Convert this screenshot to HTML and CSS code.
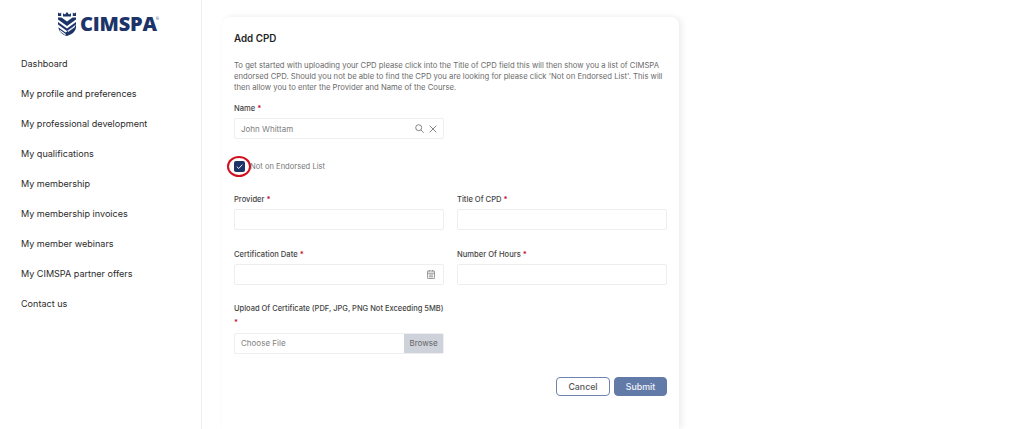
FILE: index.html
```html
<!DOCTYPE html>
<html lang="en">
<head>
<meta charset="utf-8">
<title>Add CPD</title>
<link rel="stylesheet" href="styles.css">
</head>
<body>
<aside class="sidebar">
  <div class="logo">
    <svg class="logo-mark" width="18" height="24" viewBox="0 0 18 24">
      <path fill="#1c3468" d="M0 0.500L2 1.500L3.200 0.500V4H0zM5 4.500V1.200L7 2.500L9 0L11 2.500L13 1.200V4.500zM14.800 4V0.500L16 1.500L18 0.500V4z"/>
      <path fill="#1c3468" d="M0 5.500L3.500 5.500L9 9.500L14.500 5.500H18V7.500L9 14L0 7.500zM0 10L9 16.500L18 10V12.500L9 19L0 12.500zM0.300 15.200L7.500 20.400L9 19.500L18 13V15.500C17.500 19.500 14 22.500 9 24C4 22.500 1 19.500 0.300 15.200z"/>
      <path fill="#fff" d="M1.500 17.500L8 22.300L7 22.900L2.500 19.800zM10 18.700L17 13.800V15L10 20z"/>
    </svg>
    <span class="logo-text">CIMSPA<sup class="reg">®</sup></span>
  </div>
  <nav class="nav">
    <a>Dashboard</a>
    <a>My profile and preferences</a>
    <a>My professional development</a>
    <a>My qualifications</a>
    <a>My membership</a>
    <a>My membership invoices</a>
    <a>My member webinars</a>
    <a>My CIMSPA partner offers</a>
    <a>Contact us</a>
  </nav>
</aside>
<main class="main">
  <section class="card">
    <h1>Add CPD</h1>
    <p class="intro">To get started with uploading your CPD please click into the Title of CPD field this will then show you a list of CIMSPA endorsed CPD. Should you not be able to find the CPD you are looking for please click 'Not on Endorsed List'. This will then allow you to enter the Provider and Name of the Course.</p>

    <div class="half name-field">
      <label class="label">Name <b>*</b></label>
      <div class="input">
        <span class="value">John Whittam</span>
        <svg class="icon" width="9" height="9" viewBox="0 0 9 9" fill="none" stroke="#777" stroke-width="0.900"><circle cx="3.700" cy="3.700" r="3"/><path d="M5.900 5.900L8.700 8.700"/></svg>
        <svg class="icon" width="8" height="8" viewBox="0 0 8 8" fill="none" stroke="#777" stroke-width="0.900"><path d="M0.700 0.700l6.600 6.600M7.300 0.700L0.700 7.300"/></svg>
      </div>
    </div>

    <div class="check-row">
      <span class="check">
        <svg width="9" height="9" viewBox="0 0 10 10" fill="none" stroke="#fff" stroke-width="1"><path d="M2 5.200L4.200 7.200L8.200 2.800"/></svg>
        <span class="ring"></span>
      </span>
      <span class="check-label">Not on Endorsed List</span>
    </div>

    <div class="grid">
      <div>
        <label class="label">Provider <b>*</b></label>
        <div class="input"></div>
      </div>
      <div>
        <label class="label">Title Of CPD <b>*</b></label>
        <div class="input"></div>
      </div>
      <div>
        <label class="label">Certification Date <b>*</b></label>
        <div class="input date">
          <span class="value"></span>
          <svg class="icon" width="8" height="9" viewBox="0 0 8 9" fill="none" stroke="#777" stroke-width="0.800"><rect x="0.400" y="1" width="7.200" height="7.600" rx="0.800"/><path d="M0.400 3.200H7.600M2.200 0V1.500M5.800 0V1.500M1.800 5h4.400M1.800 6.800h4.400"/></svg>
        </div>
      </div>
      <div>
        <label class="label">Number Of Hours <b>*</b></label>
        <div class="input"></div>
      </div>
    </div>

    <div class="half upload">
      <label class="label upload-label">Upload Of Certificate (PDF, JPG, PNG Not Exceeding 5MB) <b>*</b></label>
      <div class="file">
        <span class="file-name">Choose File</span>
        <span class="browse">Browse</span>
      </div>
    </div>

    <div class="actions">
      <button class="btn cancel" type="button">Cancel</button>
      <button class="btn submit" type="button">Submit</button>
    </div>
  </section>
</main>
</body>
</html>
```
FILE: styles.css
```css
* { box-sizing: border-box; }
html, body { margin: 0; height: 429px; overflow: hidden; background: #fff; }
body { display: flex; font-family: Inter, "Noto Sans", sans-serif; color: #333; }

.sidebar { width: 202px; flex: none; border-right: 1px solid #efefef; padding-top: 12px; }
.logo { display: flex; align-items: center; gap: 4px; height: 24px; padding-left: 58px; }
.logo-mark { flex: none; }
.logo-text { font-family: "Open Sans", sans-serif; font-weight: 800; font-size: 20px; line-height: 24px; color: #1c3468; letter-spacing: -0.200px; white-space: nowrap; }
.reg { font-size: 4px; font-weight: 400; line-height: 0; vertical-align: 11px; margin-left: -1px; }
.nav { display: flex; flex-direction: column; padding: 13px 0 0 21px; }
.nav a { height: 30px; line-height: 30px; font-size: 9.050px; color: #2b2b2b; white-space: nowrap; }

.main { flex: 1; padding: 17px 0 0 20px; }
.card { width: 457px; height: 412px; background: #fff; border-radius: 8px 8px 0 0; padding: 15px 12px 0; box-shadow: 3px 0 6px rgba(0, 0, 0, 0.070), 0 -1px 4px rgba(0, 0, 0, 0.015); }
h1 { margin: 0; font-size: 9.800px; line-height: 13px; font-weight: 600; color: #1f1f1f; }
.intro { margin: 15px 0 0; font-size: 7.700px; line-height: 11px; color: #6a6a6a; }

.half { width: 210px; }
.name-field { margin-top: 10px; }
.label { display: block; font-size: 7.600px; line-height: 12px; font-weight: 500; color: #444; margin-bottom: 3px; }
.label b { color: #c8102e; font-weight: 600; }
.input { display: flex; align-items: center; gap: 5px; height: 21px; padding: 0 6px; border: 1px solid #eeeeee; border-radius: 2px; background: #fff; }
.value { flex: 1; font-size: 8px; color: #808080; }
.date { padding-right: 8px; }
.icon { flex: none; }

.check-row { display: flex; align-items: center; gap: 5px; margin-top: 17px; height: 20px; }
.check { position: relative; display: flex; align-items: center; justify-content: center; flex: none; width: 11px; height: 11px; border-radius: 2px; background: #1c3468; }
.ring { position: absolute; left: -7px; top: -5px; width: 24px; height: 21px; border: 2.500px solid #d0101f; border-radius: 50%; }
.check-label { font-size: 7.600px; color: #777; }

.grid { display: grid; grid-template-columns: 210px 210px; column-gap: 13px; row-gap: 19px; margin-top: 18px; }

.upload { margin-top: 17px; }
.upload-label { font-size: 7.500px; line-height: 14px; }
.file { display: flex; height: 21px; border: 1px solid #eeeeee; border-radius: 2px; }
.file-name { flex: 1; padding-left: 6px; font-size: 8px; line-height: 19px; color: #808080; }
.browse { width: 39px; background: #ced2da; text-align: center; font-size: 8px; line-height: 19px; color: #666; }

.actions { display: flex; justify-content: flex-end; gap: 4px; margin-top: 23px; }
.btn { height: 19px; padding: 0; border-radius: 4px; font-family: inherit; font-size: 8.800px; font-weight: 500; }
.cancel { width: 54px; background: #fff; border: 1px solid #6f83ad; color: #555; }
.submit { width: 53px; background: #627aa8; border: 1px solid #627aa8; color: #f2f4f8; }
```
